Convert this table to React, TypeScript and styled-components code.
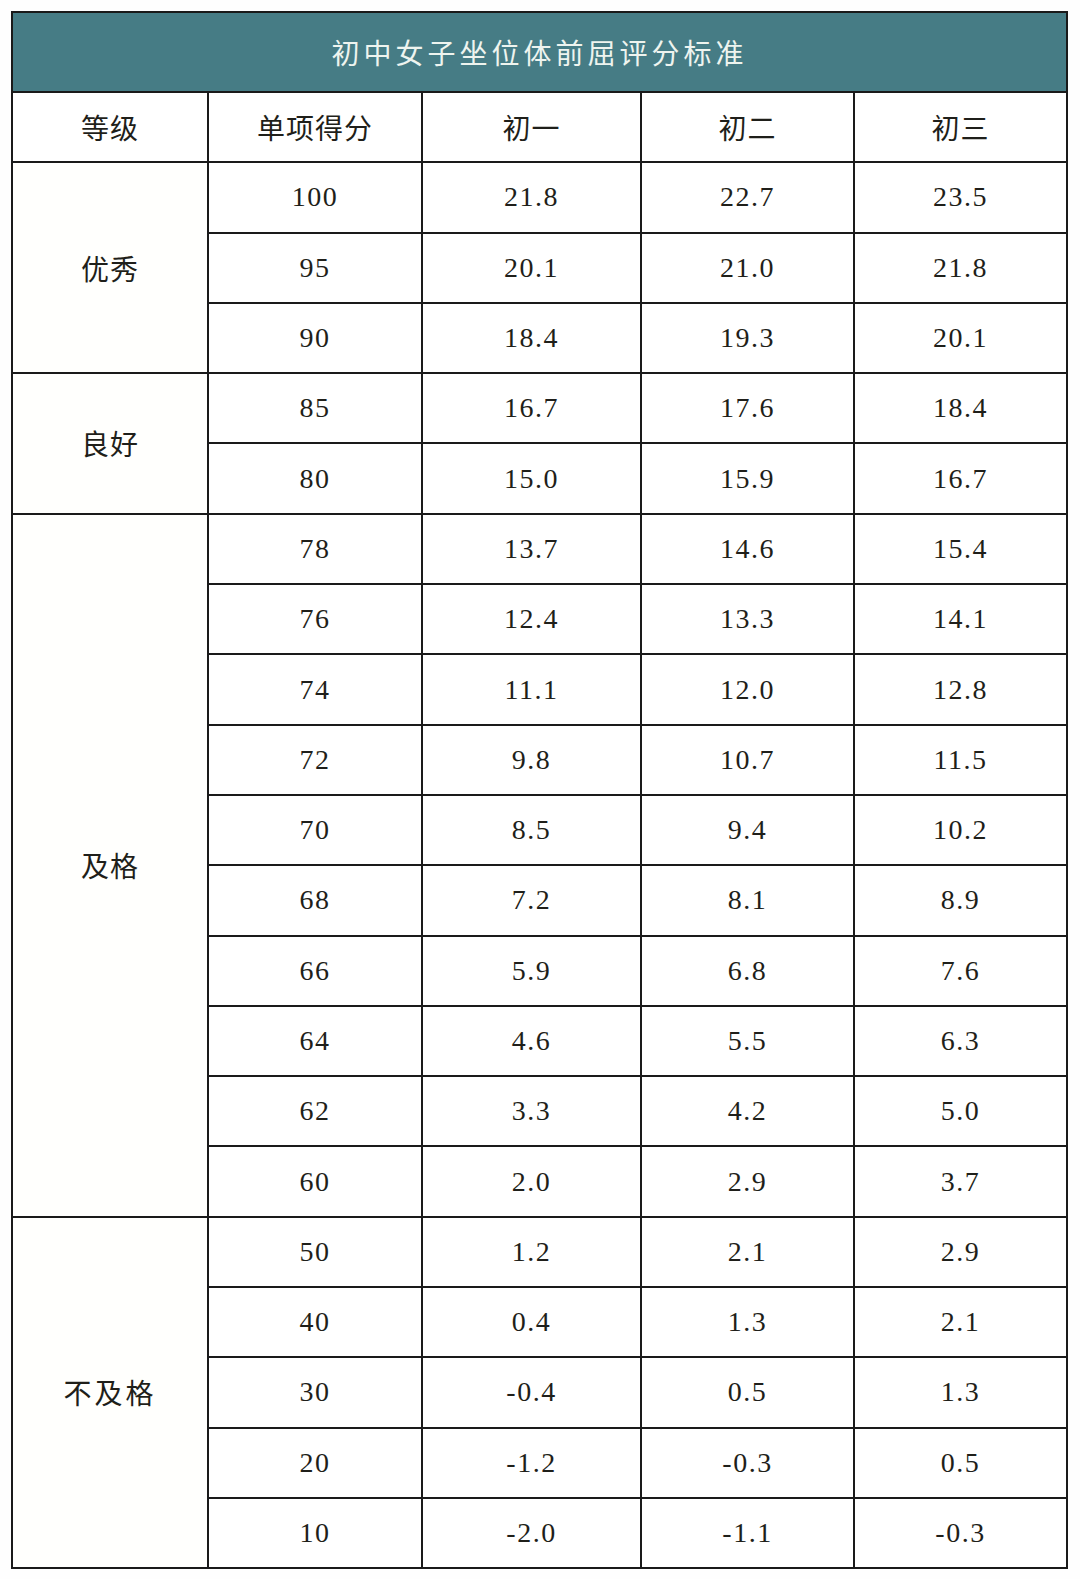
import React from 'react';
import styled, { createGlobalStyle } from 'styled-components';

interface Band {
    grade: string;
    rows: [string, string, string, string][];
}

const bands: Band[] = [
    {
        grade: '优秀',
        rows: [
            ['100', '21.8', '22.7', '23.5'],
            ['95', '20.1', '21.0', '21.8'],
            ['90', '18.4', '19.3', '20.1'],
        ],
    },
    {
        grade: '良好',
        rows: [
            ['85', '16.7', '17.6', '18.4'],
            ['80', '15.0', '15.9', '16.7'],
        ],
    },
    {
        grade: '及格',
        rows: [
            ['78', '13.7', '14.6', '15.4'],
            ['76', '12.4', '13.3', '14.1'],
            ['74', '11.1', '12.0', '12.8'],
            ['72', '9.8', '10.7', '11.5'],
            ['70', '8.5', '9.4', '10.2'],
            ['68', '7.2', '8.1', '8.9'],
            ['66', '5.9', '6.8', '7.6'],
            ['64', '4.6', '5.5', '6.3'],
            ['62', '3.3', '4.2', '5.0'],
            ['60', '2.0', '2.9', '3.7'],
        ],
    },
    {
        grade: '不及格',
        rows: [
            ['50', '1.2', '2.1', '2.9'],
            ['40', '0.4', '1.3', '2.1'],
            ['30', '-0.4', '0.5', '1.3'],
            ['20', '-1.2', '-0.3', '0.5'],
            ['10', '-2.0', '-1.1', '-0.3'],
        ],
    },
];

const headers = ['等级', '单项得分', '初一', '初二', '初三'];
const widths = [196, 214, 219, 213, 213];

const GlobalStyle = createGlobalStyle`
    html, body {
        margin: 0;
        padding: 0;
        background: #ffffff;
    }
`;

const Page = styled.div`
    width: 1080px;
    min-height: 1579px;
    padding: 11px 0 0 11px;
    box-sizing: border-box;
    background: #fefefe;
`;

const Table = styled.table`
    width: 1056px;
    border-collapse: collapse;
    table-layout: fixed;
    border: 2px solid #1a1a1a;
    color: #1f1f1a;
`;

const TitleCell = styled.th`
    height: 78px;
    padding: 0;
    background: #467c85;
    border-bottom: 2px solid #1a1a1a;
    color: #eef4ef;
    font-family: "Noto Sans CJK SC", sans-serif;
    font-weight: 400;
    font-size: 28px;
    letter-spacing: 4px;
    text-align: center;
`;

const HeadCell = styled.th`
    height: 68.3px;
    padding: 0;
    border: 2px solid #1a1a1a;
    font-family: "Noto Sans CJK SC", sans-serif;
    font-weight: 400;
    font-size: 28px;
    letter-spacing: 1px;
    text-align: center;
    background: #ffffff;
`;

const GradeCell = styled.td<{ $wide?: boolean }>`
    padding: 0;
    border: 2px solid #1a1a1a;
    font-family: "Noto Sans CJK SC", sans-serif;
    font-size: 28px;
    letter-spacing: ${props => (props.$wide ? '3px' : '1px')};
    text-align: center;
    background: #fffffd;
`;

const ValueCell = styled.td`
    height: 68.3px;
    padding: 0;
    border: 2px solid #1a1a1a;
    font-family: "Liberation Serif", serif;
    font-size: 28px;
    letter-spacing: 1.5px;
    text-align: center;
    background: #ffffff;
`;

export default function App() {
    return (
        <Page>
            <GlobalStyle />
            <Table>
                <colgroup>
                    {widths.map((w, i) => (
                        <col key={i} style={{ width: w }} />
                    ))}
                </colgroup>
                <thead>
                    <tr>
                        <TitleCell colSpan={5}>初中女子坐位体前屈评分标准</TitleCell>
                    </tr>
                    <tr>
                        {headers.map(h => (
                            <HeadCell key={h}>{h}</HeadCell>
                        ))}
                    </tr>
                </thead>
                <tbody>
                    {bands.map(band =>
                        band.rows.map((row, i) => (
                            <tr key={band.grade + row[0]}>
                                {i === 0 && (
                                    <GradeCell rowSpan={band.rows.length} $wide={band.grade.length > 2}>
                                        {band.grade}
                                    </GradeCell>
                                )}
                                {row.map((v, j) => (
                                    <ValueCell key={j}>{v}</ValueCell>
                                ))}
                            </tr>
                        ))
                    )}
                </tbody>
            </Table>
        </Page>
    );
}
